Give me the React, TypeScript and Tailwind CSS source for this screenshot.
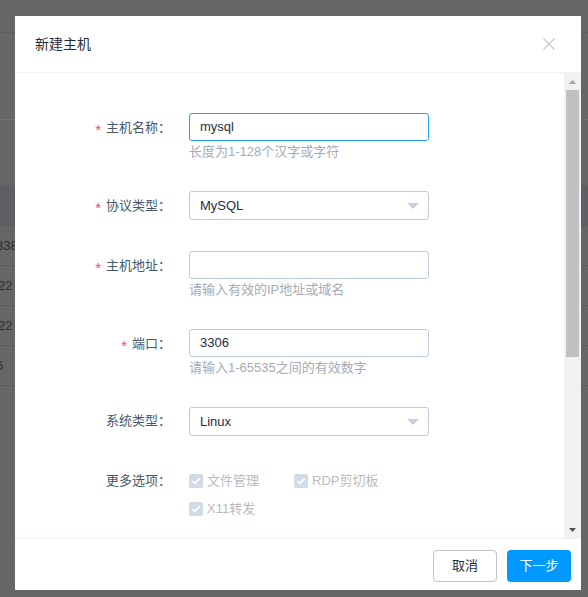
import React from "react";

const Arrow = () => (
  <svg width="12" height="6" viewBox="0 0 12 6" className="shrink-0">
    <path d="M0 0 L12 0 L6 6 Z" fill="#c5d0dc" />
  </svg>
);

const Check = () => (
  <span className="w-[14px] h-[14px] rounded-[2px] bg-[#d1dbe5] flex items-center justify-center shrink-0">
    <svg width="10" height="8" viewBox="0 0 10 8">
      <path d="M1.2 4 L3.8 6.4 L8.8 1.4" stroke="#fff" strokeWidth="1.7" fill="none" />
    </svg>
  </span>
);

function Label({ text, required }: { text: string; required?: boolean }) {
  return (
    <div className="w-[156px] h-[28px] leading-[28px] text-right text-[13px] text-[#48576a] shrink-0">
      {required && <span className="text-[#ff4949] text-[15px] mr-[5px] inline-block translate-y-[3px]">*</span>}
      {text}：
    </div>
  );
}

export default function App() {
  const font = "font-[family-name:'Liberation_Sans','Noto_Sans_CJK_SC',sans-serif]";
  return (
    <div className={`relative w-[588px] h-[597px] overflow-hidden bg-[#666666] ${font}`}>
      {/* background page */}
      <div className="h-[33px] border-b border-[#5e5e5e]" />
      <div className="h-[87px] border-b border-[#727272]" />
      <div className="h-[65px]" />
      <div className="h-[41px] bg-[#5e5f63]" />
      {["3389", "22", "22", "6"].map((t, i) => (
        <div key={i} className="h-[40px] border-b border-[#5a5a5a] flex items-center text-[13px] text-[#2d2d2d]">
          <span className={i === 0 ? "ml-[-4px]" : i === 3 ? "ml-[-4px]" : "ml-[-2px]"}>{t}</span>
        </div>
      ))}

      {/* modal */}
      <div className="absolute left-[15px] top-[16px] w-[566px] h-[574px] bg-white flex flex-col">
        <div className="h-[57px] border-b border-[#eef1f6] flex items-center justify-between pl-[20px] pr-[26px] shrink-0">
          <span className="text-[14px] text-[#1f2d3d]">新建主机</span>
          <svg width="12" height="12" viewBox="0 0 12 12">
            <path d="M0.5 0.5 L11.5 11.5 M11.5 0.5 L0.5 11.5" stroke="#c0c8d4" strokeWidth="1.2" />
          </svg>
        </div>

        <div className="h-[465px] flex shrink-0">
          <div className="flex-1 overflow-hidden pt-[40px] text-[13px]">
            {/* 主机名称 */}
            <div className="flex mb-[28px]">
              <Label text="主机名称" required />
              <div className="ml-[18px] w-[240px]">
                <div className="h-[28px] border border-[#20a0ff] rounded-[3px] px-[10px] flex items-center text-[#1f2d3d]">mysql</div>
                <div className="h-[22px] leading-[22px] text-[#a4abb6]">长度为1-128个汉字或字符</div>
              </div>
            </div>
            {/* 协议类型 */}
            <div className="flex mb-[31px]">
              <Label text="协议类型" required />
              <div className="ml-[18px] w-[240px]">
                <div className="h-[29px] border border-[#bfcbd9] rounded-[3px] pl-[10px] pr-[9px] flex items-center justify-between text-[#1f2d3d]">
                  <span>MySQL</span>
                  <Arrow />
                </div>
              </div>
            </div>
            {/* 主机地址 */}
            <div className="flex mb-[28px]">
              <Label text="主机地址" required />
              <div className="ml-[18px] w-[240px]">
                <div className="h-[28px] border border-[#bfcbd9] rounded-[3px] px-[10px]" />
                <div className="h-[22px] leading-[22px] text-[#a4abb6]">请输入有效的IP地址或域名</div>
              </div>
            </div>
            {/* 端口 */}
            <div className="flex mb-[28px]">
              <Label text="端口" required />
              <div className="ml-[18px] w-[240px]">
                <div className="h-[28px] border border-[#bfcbd9] rounded-[3px] px-[10px] flex items-center text-[#1f2d3d]">3306</div>
                <div className="h-[22px] leading-[22px] text-[#a4abb6]">请输入1-65535之间的有效数字</div>
              </div>
            </div>
            {/* 系统类型 */}
            <div className="flex mb-[31px]">
              <Label text="系统类型" />
              <div className="ml-[18px] w-[240px]">
                <div className="h-[29px] border border-[#bfcbd9] rounded-[3px] pl-[10px] pr-[9px] flex items-center justify-between text-[#1f2d3d]">
                  <span>Linux</span>
                  <Arrow />
                </div>
              </div>
            </div>
            {/* 更多选项 */}
            <div className="flex">
              <Label text="更多选项" />
              <div className="ml-[18px] w-[240px] text-[#bbbbbb]">
                <div className="h-[28px] flex items-center">
                  <div className="w-[105px] flex items-center gap-[4px]">
                    <Check />
                    <span>文件管理</span>
                  </div>
                  <div className="flex items-center gap-[4px]">
                    <Check />
                    <span>RDP剪切板</span>
                  </div>
                </div>
                <div className="h-[28px] flex items-center gap-[4px]">
                  <Check />
                  <span>X11转发</span>
                </div>
              </div>
            </div>
          </div>

          {/* scrollbar */}
          <div className="w-[17px] bg-[#f1f1f1] flex flex-col shrink-0">
            <div className="h-[17px] flex items-center justify-center">
              <svg width="7" height="4" viewBox="0 0 7 4">
                <path d="M0 4 L7 4 L3.5 0 Z" fill="#a3a3a3" />
              </svg>
            </div>
            <div className="h-[267px] mx-[2px] bg-[#c1c1c1]" />
            <div className="flex-1" />
            <div className="h-[17px] flex items-center justify-center">
              <svg width="7" height="4" viewBox="0 0 7 4">
                <path d="M0 0 L7 0 L3.5 4 Z" fill="#505050" />
              </svg>
            </div>
          </div>
        </div>

        <div className="h-[52px] border-t border-[#eef1f6] pt-[11px] pr-[10px] flex justify-end gap-[10px] shrink-0">
          <div className="w-[64px] h-[32px] border border-[#c4c4c4] rounded-[4px] flex items-center justify-center text-[13px] text-[#1f2d3d]">取消</div>
          <div className="w-[64px] h-[32px] bg-[#0099ff] rounded-[4px] flex items-center justify-center text-[13px] text-white">下一步</div>
        </div>
      </div>
    </div>
  );
}
